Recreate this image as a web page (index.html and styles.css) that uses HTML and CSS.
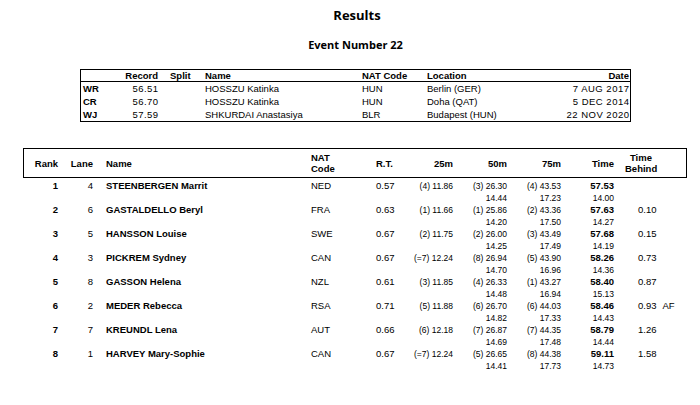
FILE: index.html
```html
<!DOCTYPE html>
<html>
<head>
<meta charset="utf-8">
<link rel="stylesheet" href="styles.css">
</head>
<body>
<div class="page">
  <h1 class="title">Results</h1>
  <h2 class="event">Event Number 22</h2>

  <div class="records">
    <div class="rec-row rec-head"><span></span><span class="r">Record</span><span class="split">Split</span><span>Name</span><span>NAT Code</span><span>Location</span><span class="r">Date</span></div>
    <div class="rec-row"><span class="lab">WR</span><span class="r num">56.51</span><span class="split"></span><span>HOSSZU Katinka</span><span>HUN</span><span>Berlin (GER)</span><span class="r date">7 AUG 2017</span></div>
    <div class="rec-row"><span class="lab">CR</span><span class="r num">56.70</span><span class="split"></span><span>HOSSZU Katinka</span><span>HUN</span><span>Doha (QAT)</span><span class="r date">5 DEC 2014</span></div>
    <div class="rec-row"><span class="lab">WJ</span><span class="r num">57.59</span><span class="split"></span><span>SHKURDAI Anastasiya</span><span>BLR</span><span>Budapest (HUN)</span><span class="r date">22 NOV 2020</span></div>
  </div>

  <div class="res-head">
    <span class="r">Rank</span>
    <span class="r">Lane</span>
    <span class="name">Name</span>
    <span>NAT<br>Code</span>
    <span>R.T.</span>
    <span class="r">25m</span>
    <span class="r">50m</span>
    <span class="r">75m</span>
    <span class="r">Time</span>
    <span class="behind-h">Time<br>Behind</span>
  </div>

  <div class="res-body">
    <div class="res-row">
      <span class="r b">1</span><span class="r">4</span><span class="name b">STEENBERGEN Marrit</span><span>NED</span><span>0.57</span>
      <span class="r sm">(4) 11.86</span>
      <span class="r sm">(3) 26.30<br>14.44</span>
      <span class="r sm">(4) 43.53<br>17.23</span>
      <span class="r"><b>57.53</b><br><span class="sm">14.00</span></span>
      <span class="behind"></span>
    </div>
    <div class="res-row">
      <span class="r b">2</span><span class="r">6</span><span class="name b">GASTALDELLO Beryl</span><span>FRA</span><span>0.63</span>
      <span class="r sm">(1) 11.66</span>
      <span class="r sm">(1) 25.86<br>14.20</span>
      <span class="r sm">(2) 43.36<br>17.50</span>
      <span class="r"><b>57.63</b><br><span class="sm">14.27</span></span>
      <span class="behind">0.10</span>
    </div>
    <div class="res-row">
      <span class="r b">3</span><span class="r">5</span><span class="name b">HANSSON Louise</span><span>SWE</span><span>0.67</span>
      <span class="r sm">(2) 11.75</span>
      <span class="r sm">(2) 26.00<br>14.25</span>
      <span class="r sm">(3) 43.49<br>17.49</span>
      <span class="r"><b>57.68</b><br><span class="sm">14.19</span></span>
      <span class="behind">0.15</span>
    </div>
    <div class="res-row">
      <span class="r b">4</span><span class="r">3</span><span class="name b">PICKREM Sydney</span><span>CAN</span><span>0.67</span>
      <span class="r sm">(=7) 12.24</span>
      <span class="r sm">(8) 26.94<br>14.70</span>
      <span class="r sm">(5) 43.90<br>16.96</span>
      <span class="r"><b>58.26</b><br><span class="sm">14.36</span></span>
      <span class="behind">0.73</span>
    </div>
    <div class="res-row">
      <span class="r b">5</span><span class="r">8</span><span class="name b">GASSON Helena</span><span>NZL</span><span>0.61</span>
      <span class="r sm">(3) 11.85</span>
      <span class="r sm">(4) 26.33<br>14.48</span>
      <span class="r sm">(1) 43.27<br>16.94</span>
      <span class="r"><b>58.40</b><br><span class="sm">15.13</span></span>
      <span class="behind">0.87</span>
    </div>
    <div class="res-row">
      <span class="r b">6</span><span class="r">2</span><span class="name b">MEDER Rebecca</span><span>RSA</span><span>0.71</span>
      <span class="r sm">(5) 11.88</span>
      <span class="r sm">(6) 26.70<br>14.82</span>
      <span class="r sm">(6) 44.03<br>17.33</span>
      <span class="r"><b>58.46</b><br><span class="sm">14.43</span></span>
      <span class="behind">0.93<span class="af">AF</span></span>
    </div>
    <div class="res-row">
      <span class="r b">7</span><span class="r">7</span><span class="name b">KREUNDL Lena</span><span>AUT</span><span>0.66</span>
      <span class="r sm">(6) 12.18</span>
      <span class="r sm">(7) 26.87<br>14.69</span>
      <span class="r sm">(7) 44.35<br>17.48</span>
      <span class="r"><b>58.79</b><br><span class="sm">14.44</span></span>
      <span class="behind">1.26</span>
    </div>
    <div class="res-row">
      <span class="r b">8</span><span class="r">1</span><span class="name b">HARVEY Mary-Sophie</span><span>CAN</span><span>0.67</span>
      <span class="r sm">(=7) 12.24</span>
      <span class="r sm">(5) 26.65<br>14.41</span>
      <span class="r sm">(8) 44.38<br>17.73</span>
      <span class="r"><b>59.11</b><br><span class="sm">14.73</span></span>
      <span class="behind">1.58</span>
    </div>
  </div>
</div>
</body>
</html>
```

FILE: styles.css
```css
* {
  box-sizing: border-box;
  margin: 0;
  padding: 0;
}

body {
  margin: 0;
  width: 700px;
  height: 405px;
  overflow: hidden;
  background: #fff;
  color: #000;
  font-family: "Liberation Sans", Arial, sans-serif;
  font-size: 9.5px;
}

.title {
  font-family: "Open Sans", sans-serif;
  font-weight: 700;
  font-size: 13px;
  line-height: 16px;
  text-align: center;
  padding-left: 14px;
  margin-top: 7px;
}

.event {
  font-family: "Open Sans", sans-serif;
  font-weight: 700;
  font-size: 11px;
  line-height: 14px;
  text-align: center;
  padding-left: 11px;
  margin-top: 15px;
}

.records {
  margin: 17px 0 0 80px;
  width: 551px;
  border: 1px solid #000;
  padding: 0 1px 0 2px;
}

.rec-row {
  display: grid;
  grid-template-columns: 37px 38px 47px 157px 65px 113px 89px;
  height: 13px;
  line-height: 12px;
  padding-top: 1px;
  white-space: nowrap;
}

.rec-head {
  height: 12px;
  line-height: 11px;
  padding: 0 1px 0 2px;
  margin: 0 -1px 0 -2px;
  font-weight: 700;
  border-bottom: 1px solid #000;
}

.lab {
  font-weight: 700;
}

.r {
  text-align: right;
}

.num {
  letter-spacing: 0.4px;
  margin-right: -0.4px;
}

.date {
  letter-spacing: 0.5px;
  margin-right: -0.5px;
}

.split {
  padding-left: 12px;
}

.res-head {
  margin: 26px 0 0 23px;
  width: 664px;
  height: 30px;
  border: 1px solid #000;
  display: grid;
  grid-template-columns: 34px 35px 218px 65px 34px 43px 54px 54px 53px 72px;
  align-items: center;
  font-weight: 700;
  line-height: 11px;
  white-space: nowrap;
}

.name {
  padding-left: 13px;
}

.behind-h {
  margin-left: 11px;
  width: 32px;
  text-align: center;
}

.res-body {
  margin: 2px 0 0 24px;
  width: 662px;
}

.res-row {
  display: grid;
  grid-template-columns: 34px 35px 218px 65px 34px 43px 54px 54px 53px 72px;
  height: 24px;
  line-height: 12px;
  white-space: nowrap;
}

.b {
  font-weight: 700;
}

.sm {
  font-size: 8.5px;
}

.behind {
  padding-left: 24px;
}

.af {
  margin-left: 6px;
}
```
